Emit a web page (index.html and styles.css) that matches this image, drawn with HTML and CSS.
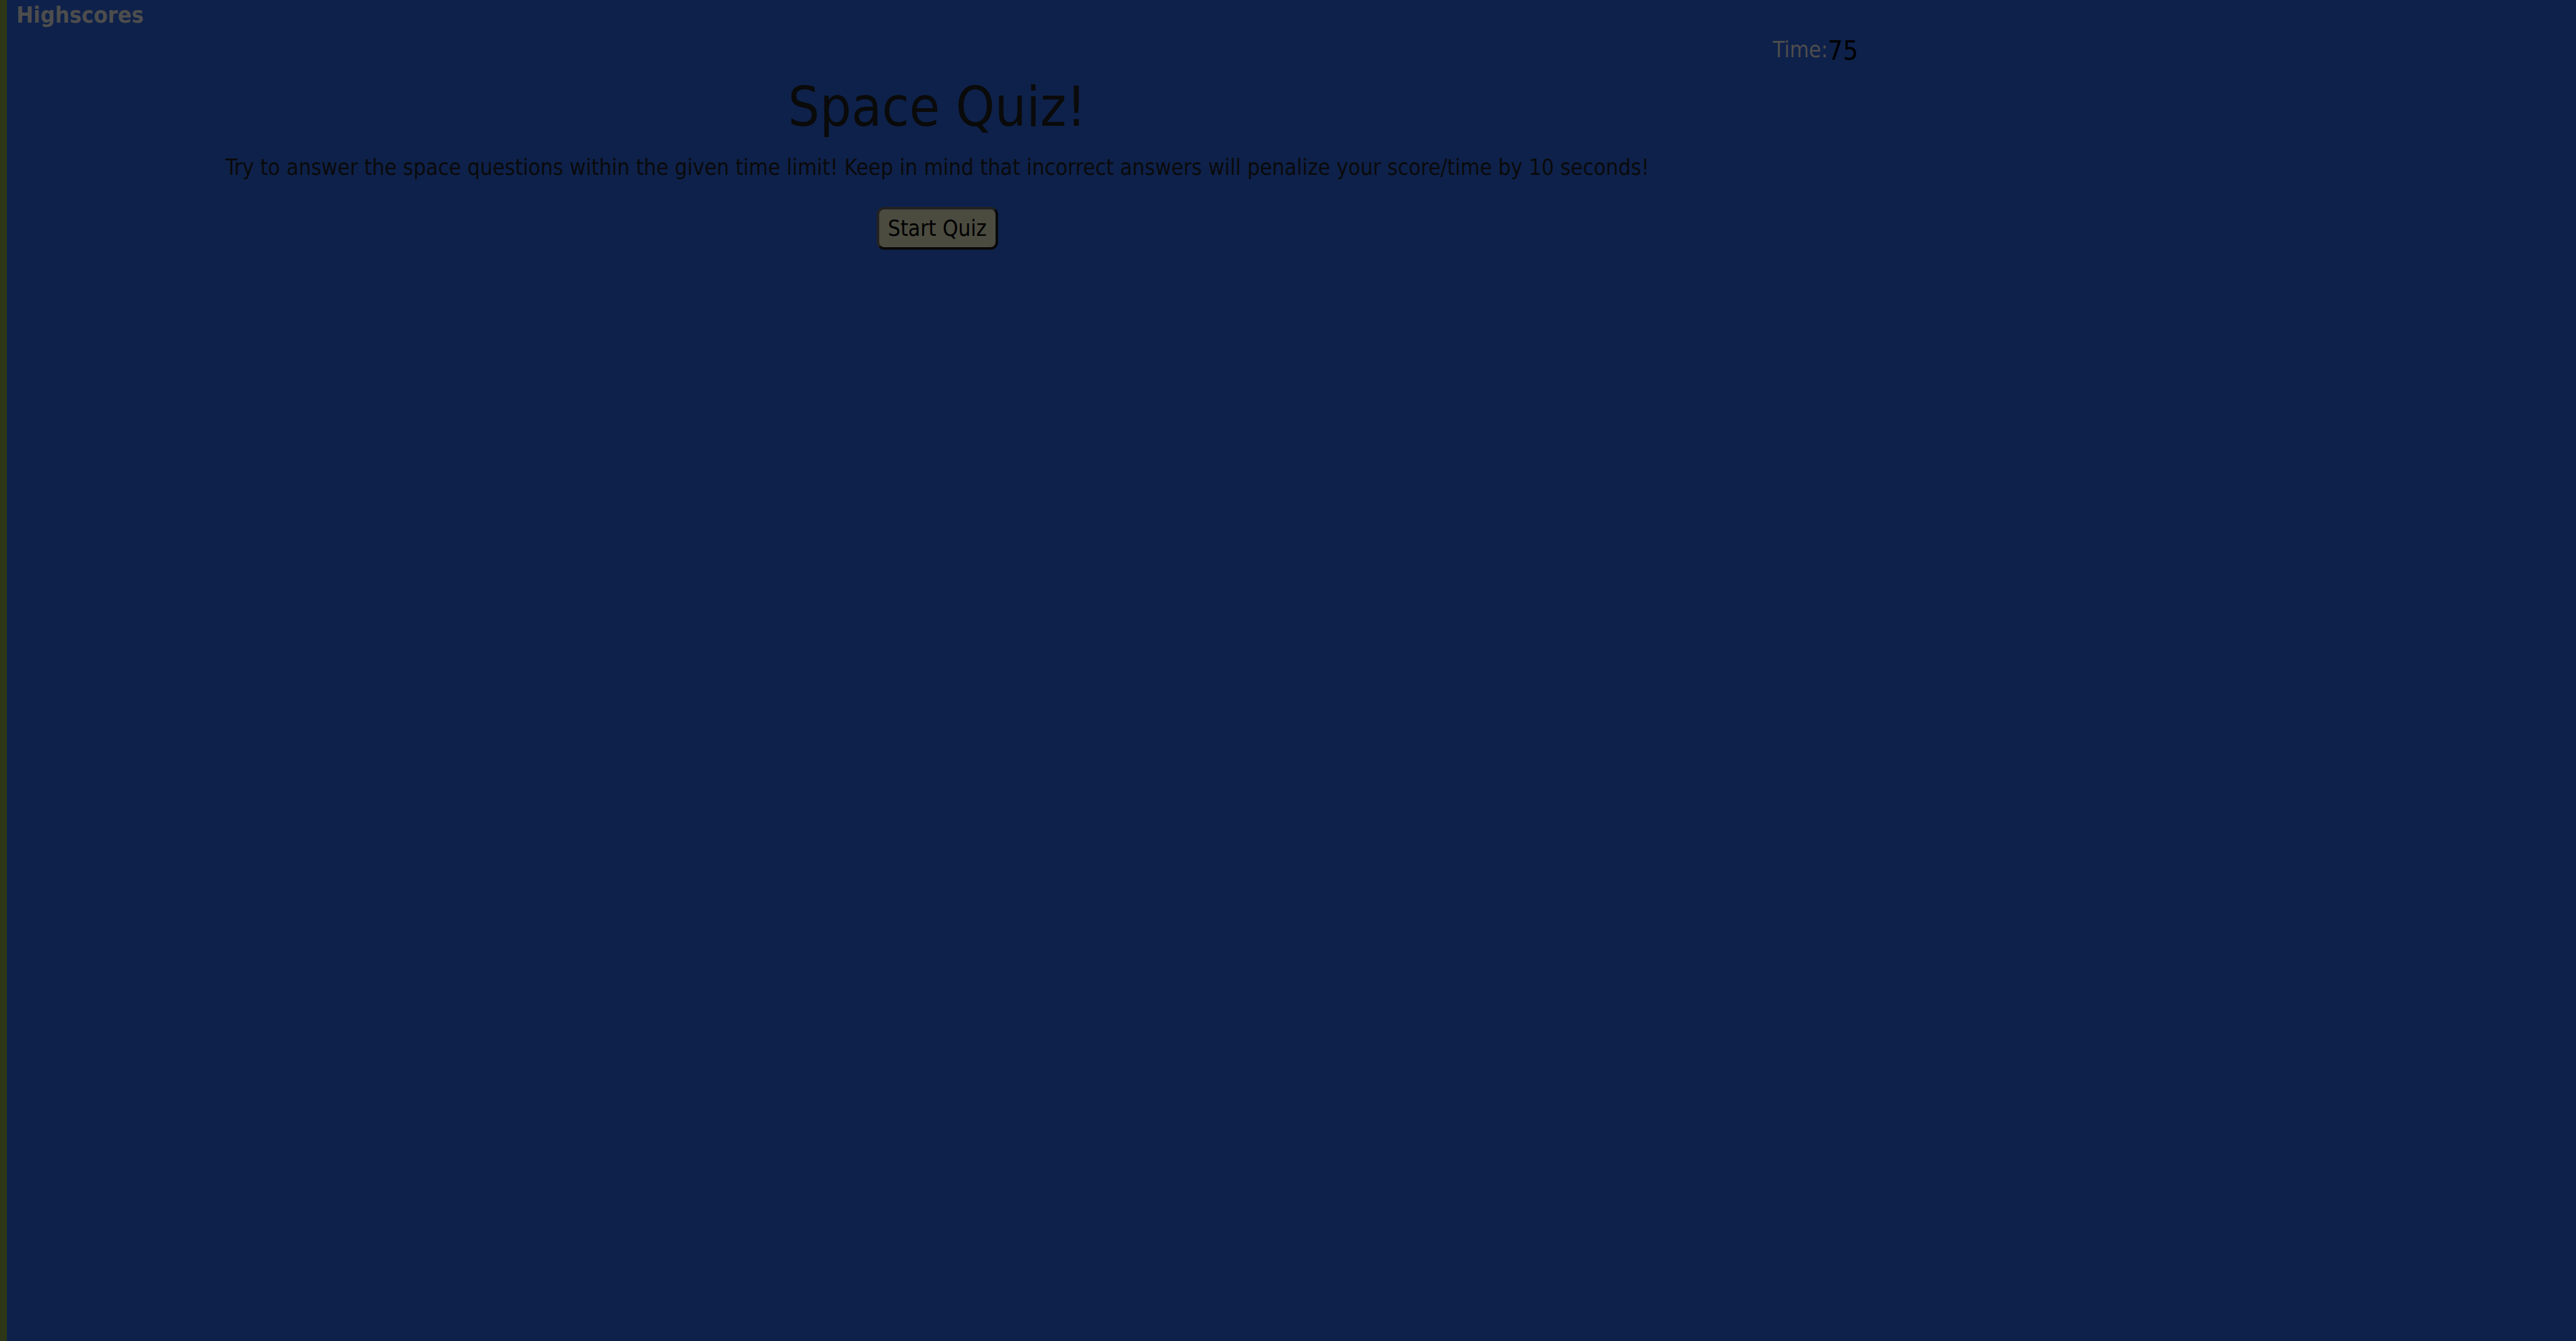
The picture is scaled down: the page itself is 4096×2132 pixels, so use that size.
FILE: index.html
```html
<!DOCTYPE html>
<html lang="en">
<head>
  <meta charset="utf-8">
  <title>Space Quiz</title>
  <link rel="stylesheet" href="styles.css">
</head>
<body>
  <header class="top">
    <a class="scores-link" href="#highscores">Highscores</a>
    <div class="timer"><span class="timer-label">Time:</span><span class="timer-value">75</span></div>
  </header>
  <main class="quiz">
    <h1 class="title">Space Quiz!</h1>
    <p class="intro">Try to answer the space questions within the given time limit! Keep in mind that incorrect answers will penalize your score/time by 10 seconds!</p>
    <button class="start" type="button">Start Quiz</button>
  </main>
</body>
</html>
```
FILE: styles.css
```css
* {
  box-sizing: border-box;
}

body {
  margin: 0;
  min-height: 100vh;
  padding: 2px 14px 0 15px;
  border-left: 11px solid #2d3717;
  background: #0e214a;
  color: #0a0a0a;
  font-family: Tahoma, "DejaVu Sans Condensed", "DejaVu Sans", sans-serif;
  font-size: 35px;
  line-height: 44px;
}

.top,
.quiz {
  display: flex;
  flex-direction: column;
  width: 72.2%;
}

.scores-link {
  align-self: flex-start;
  color: #4d4d4d;
  font-size: 36px;
  font-weight: bold;
  text-decoration: none;
}

.timer {
  display: flex;
  align-self: flex-end;
  margin-top: 11px;
}

.timer-label {
  color: #4d4d4d;
}

.timer-value {
  color: #000;
  font-size: 42px;
  line-height: 48px;
}

.quiz {
  align-items: center;
  padding-top: 10px;
}

.title {
  margin: 0;
  font-size: 88px;
  font-weight: normal;
  line-height: 110px;
}

.intro {
  margin: 19px 0 41px;
}

.start {
  padding: 8px 14px;
  border: 4px solid;
  border-color: #222 #080808 #080808 #222;
  border-radius: 12px;
  background: #4b4b40;
  color: #000;
  font: inherit;
}
```
